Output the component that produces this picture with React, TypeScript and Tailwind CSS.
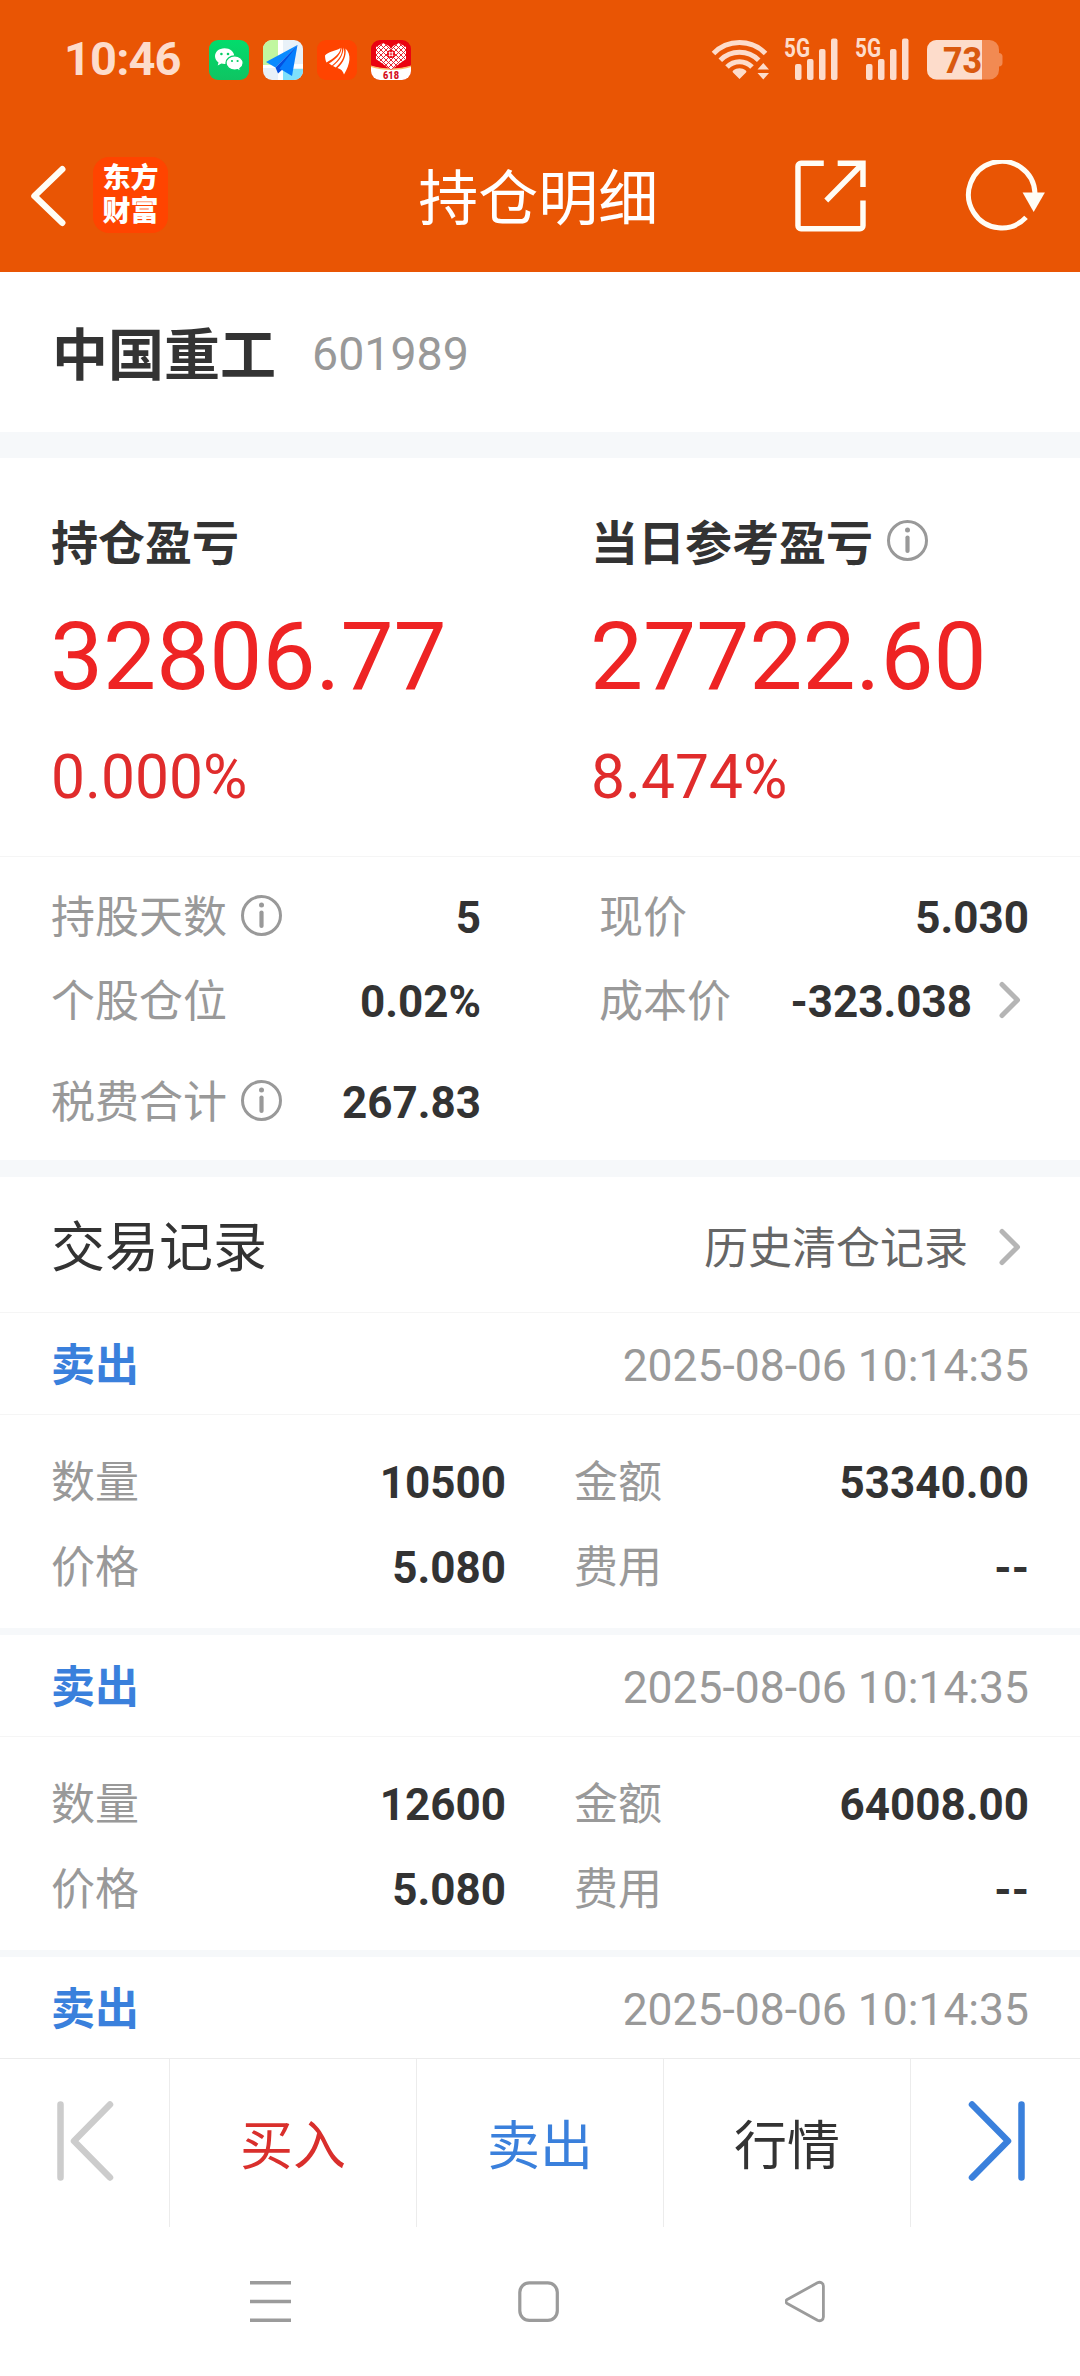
import React from "react";
import clsx from "clsx";

interface TradeDetail {
  quantity: string;
  amount: string;
  price: string;
  fee: string;
}

interface Trade {
  id: number;
  time: string;
  detail?: TradeDetail;
}

const trades: Array<Trade> = [
  {
    id: 1,
    time: "2025-08-06 10:14:35",
    detail: { quantity: "10500", amount: "53340.00", price: "5.080", fee: "--" },
  },
  {
    id: 2,
    time: "2025-08-06 10:14:35",
    detail: { quantity: "12600", amount: "64008.00", price: "5.080", fee: "--" },
  },
  { id: 3, time: "2025-08-06 10:14:35" },
];

const InfoIcon = ({ className }: { className?: string }) => (
  <svg
    className={clsx("w-[41px] h-[41px] shrink-0", className)}
    viewBox="0 0 41 41"
    fill="none"
  >
    <circle cx="20.5" cy="20.5" r="19" stroke="#999" strokeWidth="3" />
    <circle cx="20.5" cy="10" r="2.5" fill="#999" />
    <path d="M20.5 17.5V31" stroke="#999" strokeWidth="4.2" strokeLinecap="round" />
  </svg>
);

const ChevronRight = ({ className }: { className?: string }) => (
  <svg
    className={clsx("w-[22px] h-[38px] shrink-0", className)}
    viewBox="0 0 22 38"
    fill="none"
    stroke="#b5b5b5"
    strokeWidth="5"
    strokeLinecap="round"
    strokeLinejoin="round"
  >
    <path d="M3 3.5 18.5 19 3 34.5" />
  </svg>
);

const SignalIcon = () => (
  <svg
    className="w-[54px] h-[42px] overflow-visible text-[#fddccb]"
    viewBox="0 0 54 42"
    fill="currentColor"
  >
    <text
      x="0"
      y="18.5"
      fontFamily="Roboto"
      fontWeight="700"
      fontSize="26"
      textLength="26"
      lengthAdjust="spacingAndGlyphs"
    >
      5G
    </text>
    <rect x="11" y="26" width="6.5" height="16" rx="2" />
    <rect x="23" y="21" width="6.5" height="21" rx="2" />
    <rect x="35" y="11" width="6.5" height="31" rx="2" />
    <rect x="47" y="0.5" width="6.5" height="41.5" rx="2" />
  </svg>
);

const StatusBar = () => (
  <div className="flex h-[120px] pt-[38px] pl-[64px] pr-[77px] text-[#fddccb]">
    <span className="w-[145px] mt-[-1px] h-11 leading-11 text-[47px] font-bold tracking-[-0.9px] whitespace-nowrap">
      10:46
    </span>

    <div className="flex gap-[14px] pt-0.5">
      {/* chat */}
      <svg className="w-10 h-10" viewBox="0 0 40 40">
        <defs>
          <linearGradient id="chat" x1="0" y1="0" x2="0" y2="1">
            <stop offset="0" stopColor="#02dc6c" />
            <stop offset="1" stopColor="#0fc462" />
          </linearGradient>
        </defs>
        <rect width="40" height="40" rx="9" fill="url(#chat)" />
        <path
          d="M15.5 8.2C10 8.2 6 11.8 6 16.2c0 2.6 1.4 4.8 3.5 6.2L8.7 25.600l3.700-2c1 .3 2 .4 3.100.4 5.500 0 9.700-3.500 9.700-7.900s-4.200-7.900-9.700-7.900z"
          fill="#fff"
        />
        <path
          d="M25.7 15.8c-4.900 0-8.700 3.200-8.700 7.100s3.800 7.200 8.700 7.200c1 0 1.900-.1 2.800-.4l3.100 1.600-.7-2.800c2-1.300 3.300-3.300 3.300-5.600 0-3.900-3.700-7.100-8.500-7.100z"
          fill="#fff"
          stroke="#08ce66"
          strokeWidth="1.3"
        />
        <circle cx="12.4" cy="14" r="1.3" fill="#08ce66" />
        <circle cx="19" cy="14" r="1.3" fill="#08ce66" />
        <circle cx="23" cy="21" r="1.1" fill="#08ce66" />
        <circle cx="28.6" cy="21" r="1.1" fill="#08ce66" />
      </svg>
      {/* map */}
      <svg className="w-10 h-10" viewBox="0 0 40 40">
        <defs>
          <clipPath id="mapClip">
            <rect width="40" height="40" rx="9" />
          </clipPath>
        </defs>
        <g clipPath="url(#mapClip)">
          <rect width="40" height="40" fill="#e9f1f8" />
          <path d="M0 0h15v25H0z" fill="#c1f7a0" />
          <path d="M15 0h5v40h-5zM0 25l40-1v4H0z" fill="#fff" />
          <path d="M20 29h20v11H20z" fill="#7fe0fb" />
          <path d="M34.5 5 3 22l9.500 5.500z" fill="#0a8bff" />
          <path d="M34.5 5 12.5 27.5l2.500 6 5-4.500z" fill="#0350e0" />
          <path d="M34.5 5 16.5 28.5l12.500 7.500z" fill="#067dfc" />
        </g>
      </svg>
      {/* broker */}
      <svg className="w-10 h-10" viewBox="0 0 40 40">
        <rect width="40" height="40" rx="9" fill="#ff4400" />
        <g fill="#fff">
          <path d="M8 15.500C11 11.500 18 11.500 23.500 8 23 14 17 18 9.500 22.500 8.500 20.500 8 18 8 15.500z" />
          <path d="M24.800 7.500C26.500 14 21 20.500 15 25.500L12 23.500C18.500 19.500 24 14.500 24.800 7.500z" />
          <path d="M26.500 7.500C29 15 25 22 18.800 27.500L16 26C22.500 21 26.500 15 26.500 7.500z" />
          <path d="M28.500 8.500C34.500 14 33.500 24 27 34.500 26 31 24 29 20.500 28 26.500 22.500 29.500 16 28.500 8.500z" />
        </g>
      </svg>
      {/* shopping */}
      <svg className="w-10 h-10" viewBox="0 0 40 40">
        <defs>
          <clipPath id="shopClip">
            <rect width="40" height="40" rx="9" />
          </clipPath>
          <pattern id="knot" width="5" height="5" patternUnits="userSpaceOnUse">
            <path d="M0 0 5 5M5 0 0 5" stroke="#e6121c" strokeWidth=".9" />
          </pattern>
        </defs>
        <g clipPath="url(#shopClip)">
          <rect width="40" height="40" fill="#ea0310" />
          <path d="M0 26c12 4 28 4 40 0v14H0z" fill="#fff" />
          <path d="M0 25.500c12 4 28 4 40 0v1.500c-12 4-28 4-40 0z" fill="#fbbd6a" />
          <path
            d="M12 3 18 6l2 3 2-3 6-3 7 4v12l-7 5-8 6-8-6-7-5V7z"
            fill="#fff"
          />
          <path
            d="M12 3 18 6l2 3 2-3 6-3 7 4v12l-7 5-8 6-8-6-7-5V7z"
            fill="url(#knot)"
          />
          <circle cx="20" cy="14" r="4" fill="#ea0310" />
          <path
            d="M18.700 11.500v5M21.300 11.500v5M17.500 12.800h5M17.500 15.300h5"
            stroke="#fff"
            strokeWidth=".9"
          />
          <text
            x="12"
            y="38.5"
            fontFamily="Roboto"
            fontWeight="900"
            fontSize="10"
            textLength="16"
            lengthAdjust="spacingAndGlyphs"
            fill="#d5101f"
          >
            618
          </text>
        </g>
      </svg>
    </div>

    <div className="flex-1" />

    {/* wifi */}
    <svg className="w-[58px] h-[42px] mr-[15px]" viewBox="0 0 58 42">
      <g fill="none" stroke="#fddccb" strokeWidth="5">
        <path d="M2.500 15.500a36.500 36.500 0 0 1 52 0" />
        <path d="M9.300 22.300a27 27 0 0 1 38.400 0" />
        <path d="M16 29a17.500 17.500 0 0 1 25 0" />
      </g>
      <path
        d="M28.500 41 22 34.600c-.6-.7-.5-1.500.2-2 3.800-3 8.800-3 12.600 0 .7.500.8 1.300.2 2z"
        fill="#fddccb"
      />
      <path d="M52.300 25 58 31.500H46.500zM46.500 35H58l-5.700 6.500z" fill="#fddccb" />
    </svg>
    <SignalIcon />
    <div className="w-[17px]" />
    <SignalIcon />
    {/* battery */}
    <svg className="w-[76px] h-10 mt-0.5 ml-[18px]" viewBox="0 0 76 40">
      <defs>
        <clipPath id="charge">
          <rect width="55" height="40" />
        </clipPath>
      </defs>
      <rect width="72" height="39.5" rx="9.5" fill="#f28a52" />
      <path d="M72 13c2 0 3.500 1.500 3.500 3.500v6.500c0 2-1.500 3.500-3.500 3.500z" fill="#f28a52" />
      <rect width="72" height="39.5" rx="9.5" fill="#fddccb" clipPath="url(#charge)" />
      <text
        x="16"
        y="32.5"
        fontFamily="Roboto"
        fontWeight="800"
        fontSize="36"
        textLength="39"
        lengthAdjust="spacingAndGlyphs"
        fill="#d9590f"
      >
        73
      </text>
    </svg>
  </div>
);

const TitleBar = () => (
  <div className="flex items-center h-[152px] pl-[30px] pr-[34px] text-white">
    <svg
      className="w-[37px] h-[62px]"
      viewBox="0 0 37 62"
      fill="none"
      stroke="#fffdf5"
      strokeWidth="6.5"
      strokeLinecap="round"
      strokeLinejoin="round"
    >
      <path d="M32.500 4 4.500 31l28 27" />
    </svg>
    <div className="flex flex-col items-center justify-center w-[76px] h-[76px] ml-[26px] mt-[-2px] rounded-[16px] bg-[#ff4400] text-[28px] leading-[33px] font-black">
      <span>东方</span>
      <span>财富</span>
    </div>
    <h1 className="ml-[250px] mt-[8px] w-[240px] text-[60px] leading-[72px] font-normal whitespace-nowrap">
      持仓明细
    </h1>
    <svg
      className="w-[72px] h-[72px] ml-[137px]"
      viewBox="0 0 72 72"
      fill="none"
      stroke="#fffdf5"
      strokeWidth="5.5"
    >
      <path d="M29 3H6a3 3 0 0 0-3 3v60a3 3 0 0 0 3 3h59.500a3 3 0 0 0 3-3V40.500" />
      <path d="M43 3h25.500v24M67.500 4 31.500 40.500" />
    </svg>
    <svg className="w-[82px] h-[72px] ml-[98px]" viewBox="0 0 82 72" fill="none">
      <path
        d="M61.500 57.500A33.500 33.500 0 1 1 70.500 33"
        stroke="#fffdf5"
        strokeWidth="5"
      />
      <path d="M58 32.500h22.500L69.200 52z" fill="#fffdf5" />
    </svg>
  </div>
);

interface ProfitProps {
  label: string;
  value: string;
  percent: string;
  info?: boolean;
}

const Profit = ({ label, value, percent, info }: ProfitProps) => (
  <div className="w-[540px] shrink-0">
    <div className="flex items-center h-[60px]">
      <span className="text-[47px] leading-[60px] font-bold">{label}</span>
      {info && <InfoIcon className="ml-[14px] mt-[-7px]" />}
    </div>
    <div className="mt-[33px] ml-[-1px] h-[100px] text-[94.5px] leading-[100px] text-[#ee2424]">
      {value}
    </div>
    <div className="mt-[36px] h-[70px] text-[60.5px] leading-[70px] text-[#e02c2c]">
      {percent}
    </div>
  </div>
);

interface StatProps {
  label: string;
  value: string;
  info?: boolean;
  arrow?: boolean;
}

const Stat = ({ label, value, info, arrow }: StatProps) => (
  <div className="flex items-center w-[430px] h-[84px] text-[44px] leading-[60px]">
    <span className="text-[#999]">{label}</span>
    {info && <InfoIcon className="ml-[14px] mt-[-5px]" />}
    <span className="ml-auto font-bold">{value}</span>
    {arrow && <ChevronRight className="ml-[27px] mr-[8px] mt-[-5px]" />}
  </div>
);

const Field = ({ label, value }: { label: string; value: string }) => (
  <div className="flex items-center justify-between">
    <span className="text-[#999]">{label}</span>
    <span className="font-bold">{value}</span>
  </div>
);

const TradeCard = ({ trade }: { trade: Trade }) => (
  <div className="text-[44px] leading-[60px]">
    <div className="flex items-center justify-between h-[101px] pt-[5px] pl-[51px] pr-[51px]">
      <span className="font-bold text-[#3a80dc]">卖出</span>
      <span className="text-[#999] text-[44.4px]">{trade.time}</span>
    </div>
    {trade.detail && (
      <div className="grid grid-cols-[455px_455px] auto-rows-[85.5px] gap-x-[68px] h-[221px] pt-[25px] pl-[51px] border-t border-t-[#f5f5f5] border-b-[7px] border-b-[#f6f8fa]">
        <Field label="数量" value={trade.detail.quantity} />
        <Field label="金额" value={trade.detail.amount} />
        <Field label="价格" value={trade.detail.price} />
        <Field label="费用" value={trade.detail.fee} />
      </div>
    )}
  </div>
);

const BottomBar = () => (
  <div className="flex h-[169px] shrink-0 border-t border-[#ececec] divide-x divide-[#ececec] text-[53px] leading-[160px] text-center bg-white">
    <div className="w-[170px] pl-[57px] pt-[42px]">
      <svg
        className="w-[57px] h-[80px]"
        viewBox="0 0 57 80"
        fill="none"
        stroke="#ccc"
        strokeWidth="6.5"
        strokeLinecap="round"
        strokeLinejoin="round"
      >
        <path d="M3.500 3.500v73M53 3.500 17 40l36 36.500" />
      </svg>
    </div>
    <div className="w-[247px] pt-[8px] text-[#d92f2c]">买入</div>
    <div className="w-[247px] pt-[8px] text-[#3a80dc]">卖出</div>
    <div className="w-[247px] pt-[8px]">行情</div>
    <div className="w-[169px] pl-[57px] pt-[42px]">
      <svg
        className="w-[57px] h-[80px]"
        viewBox="0 0 57 80"
        fill="none"
        stroke="#3a80dc"
        strokeWidth="6.5"
        strokeLinecap="round"
        strokeLinejoin="round"
      >
        <path d="M53.500 3.500v73M4 3.500 40 40 4 76.500" />
      </svg>
    </div>
  </div>
);

const SystemNav = () => (
  <div className="flex h-[149px] shrink-0 pt-[53px] pl-[250px] bg-white">
    <svg className="w-[42px] h-[43px]" viewBox="0 0 42 43" stroke="#9b9b9b" strokeWidth="3.6">
      <path d="M0 2.800h41M0 21.500h41M0 40.200h41" />
    </svg>
    <svg className="w-[42px] h-[43px] ml-[226px]" viewBox="0 0 42 43" fill="none">
      <rect x="1.8" y="2.8" width="37.5" height="37.5" rx="9.5" stroke="#9b9b9b" strokeWidth="3.2" />
    </svg>
    <svg className="w-[42px] h-[43px] ml-[225px]" viewBox="0 0 42 43" fill="none">
      <path
        d="M2.200 19.500 32.500 2.800c2.800-1.400 5.900.2 5.900 3.200v31c0 3-3.100 4.600-5.900 3.200L2.200 23.500c-1.600-1-1.600-3 0-4z"
        stroke="#9b9b9b"
        strokeWidth="2.8"
        strokeLinejoin="round"
      />
    </svg>
  </div>
);

export default function App() {
  return (
    <div className="flex flex-col w-[1080px] h-[2376px] overflow-hidden bg-white text-[#333] font-[Roboto,'Noto_Sans_CJK_SC',sans-serif]">
      <header className="h-[272px] shrink-0 bg-[#e95504]">
        <StatusBar />
        <TitleBar />
      </header>

      <main className="flex-1 min-h-0">
        <div className="flex items-center h-[160px] pt-[8px] pl-[52px]">
          <span className="text-[56px] leading-[70px] font-bold">中国重工</span>
          <span className="ml-[36px] mt-[-4px] text-[46.5px] leading-[60px] text-[#999]">
            601989
          </span>
        </div>

        <section className="flex h-[424px] pt-[56px] pl-[51px] border-t-[26px] border-[#f6f8fa]">
          <Profit label="持仓盈亏" value="32806.77" percent="0.000%" />
          <Profit label="当日参考盈亏" value="27722.60" percent="8.474%" info />
        </section>

        <section className="h-[304px] pt-[19px] pl-[51px] border-t border-[#f5f5f5]">
          <div className="flex gap-[118px]">
            <Stat label="持股天数" value="5" info />
            <Stat label="现价" value="5.030" />
          </div>
          <div className="flex gap-[118px]">
            <Stat label="个股仓位" value="0.02%" />
            <Stat label="成本价" value="-323.038" arrow />
          </div>
          <div className="flex mt-[17px]">
            <Stat label="税费合计" value="267.83" info />
          </div>
        </section>

        <section className="border-t-[17px] border-[#f6f8fa]">
          <div className="flex items-center justify-between h-[136px] pt-[9px] pl-[51px] pr-[59px] border-b border-[#f5f5f5]">
            <h2 className="text-[54px] leading-[70px]">交易记录</h2>
            <div className="flex items-center text-[44px] leading-[60px] text-[#666]">
              历史清仓记录
              <ChevronRight className="ml-[31px] mt-[-5px]" />
            </div>
          </div>
          {trades.map((trade) => (
            <TradeCard key={trade.id} trade={trade} />
          ))}
        </section>
      </main>

      <BottomBar />
      <SystemNav />
    </div>
  );
}
